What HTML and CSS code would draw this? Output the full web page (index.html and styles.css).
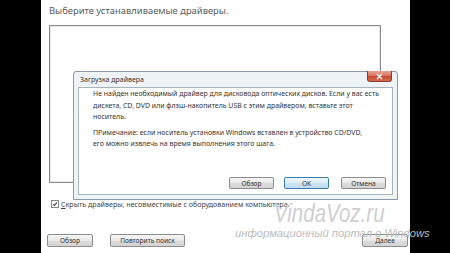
FILE: index.html
```html
<!DOCTYPE html>
<html lang="ru">
<head>
<meta charset="utf-8">
<title>Выберите устанавливаемые драйверы</title>
<link rel="stylesheet" href="styles.css">
</head>
<body>
<div class="screen">
  <div class="bar-left"></div>
  <div class="panel">
    <div class="heading">Выберите устанавливаемые драйверы.</div>
    <div class="listbox"></div>
    <div class="check-row">
      <span class="checkbox"><svg width="8" height="8" viewBox="0 0 8 8"><path d="M1.5 4 L3.3 6 L6.6 1.6" fill="none" stroke="#333" stroke-width="1.4"/></svg></span>
      <span class="check-label"><u>С</u>крыть драйверы, несовместимые с оборудованием компьютера.</span>
    </div>
    <div class="button-row">
      <span class="btn btn-browse">Обзор</span>
      <span class="btn btn-retry">Повторить поиск</span>
      <span class="btn btn-next">Далее</span>
    </div>

    <div class="dialog">
      <div class="dialog-title">Загрузка драйвера</div>
      <div class="dialog-close"><svg width="9" height="7" viewBox="0 0 9 7"><path d="M2 1 L7 6 M7 1 L2 6" stroke="#fff" stroke-width="1.3"/></svg></div>
      <div class="dialog-body">
        <p class="dialog-text">Не найден необходимый драйвер для дисковода оптических дисков. Если у вас есть<br>дискета, CD, DVD или флэш-накопитель USB с этим драйвером, вставьте этот<br>носитель.</p>
        <p class="dialog-text">ПРимечание: если носитель установки Windows вставлен в устройство CD/DVD,<br>его можно извлечь на время выполнения этого шага.</p>
        <div class="dialog-buttons">
          <span class="btn dbtn">Обзор</span>
          <span class="btn dbtn btn-default">OK</span>
          <span class="btn dbtn">Отмена</span>
        </div>
      </div>
    </div>
  </div>
  <div class="wm-site">VindaVoz.ru</div>
  <div class="wm-tag">информационный портал о Windows</div>
</div>
</body>
</html>
```
FILE: styles.css
```css
html, body {
  margin: 0;
  padding: 0;
  background: #000;
}
.screen {
  position: relative;
  display: flex;
  width: 450px;
  height: 253px;
  overflow: hidden;
  font-family: "Noto Sans", "Liberation Sans", sans-serif;
}
.bar-left {
  width: 41px;
  flex: none;
}
.panel {
  position: relative;
  width: 369px;
  flex: none;
  background: #fff;
  display: flex;
  flex-direction: column;
}
.heading {
  margin: 4px 0 0 8px;
  font-size: 9.4px;
  line-height: 13px;
  color: #5b5b5b;
  white-space: nowrap;
}
.listbox {
  margin: 8px 0 0 8px;
  width: 332px;
  height: 158px;
  box-sizing: border-box;
  border: 1px solid #8d8d8d;
  box-shadow: inset 0 0 0 1px #e6e6e6;
}
.check-row {
  display: flex;
  align-items: center;
  gap: 2px;
  margin: 16px 0 0 10px;
  height: 10px;
  font-size: 7.1px;
  color: #444;
  white-space: nowrap;
}
.checkbox {
  width: 8px;
  height: 8px;
  box-sizing: border-box;
  border: 1px solid #8a8a8a;
  background: #fff;
  display: flex;
  align-items: center;
  justify-content: center;
}
.checkbox svg { display: block; }
.button-row {
  display: flex;
  margin: 25px 0 0 6px;
}
.btn {
  display: flex;
  align-items: center;
  justify-content: center;
  box-sizing: border-box;
  height: 13px;
  border: 1px solid #8c8c8c;
  border-radius: 2px;
  background: linear-gradient(#f6f6f6, #e8e8e8 50%, #dcdcdc 51%, #d4d4d4);
  font-size: 6.6px;
  color: #333;
  white-space: nowrap;
}
.btn-browse { width: 46px; }
.btn-retry { width: 75px; margin-left: 17px; }
.btn-next { width: 46px; margin-left: auto; margin-right: 2px; }

.dialog {
  position: absolute;
  left: 32px;
  top: 71px;
  width: 325px;
  height: 129px;
  box-sizing: border-box;
  border: 1px solid #8a9aa8;
  border-radius: 3px 3px 0 0;
  background: #eef4f6;
  display: flex;
  flex-direction: column;
}
.dialog-title {
  height: 15px;
  padding-left: 6px;
  font-size: 7px;
  line-height: 16px;
  color: #333;
}
.dialog-close {
  position: absolute;
  top: -1px;
  left: 293px;
  width: 25px;
  height: 11px;
  box-sizing: border-box;
  border: 1px solid #8a3a2e;
  border-top: none;
  border-radius: 0 0 3px 3px;
  background: linear-gradient(#e5a595, #d7725d 50%, #c44a30 51%, #d66a50);
  display: flex;
  align-items: center;
  justify-content: center;
}
.dialog-close svg { display: block; }
.dialog-body {
  margin: 0 4px 4px 4px;
  flex: 1;
  background: #fff;
  border: 1px solid #a8b4bc;
  display: flex;
  flex-direction: column;
  padding: 0 6px 5px 14px;
}
.dialog-text {
  margin: 0 0 4px 0;
  font-size: 6.95px;
  line-height: 11.6px;
  color: #333;
  white-space: nowrap;
}
.dialog-buttons {
  margin-top: auto;
  display: flex;
  justify-content: flex-end;
  gap: 10px;
}
.dbtn {
  width: 45px;
  height: 12px;
}
.btn-default {
  border-color: #3a7cb0;
  background: linear-gradient(#eef6fb, #dcecf7 50%, #cde3f2 51%, #c4dcee);
  margin-right: 2px;
}

.wm-site {
  position: absolute;
  left: 274px;
  top: 199px;
  font-family: "Liberation Sans", sans-serif;
  font-style: italic;
  font-size: 25px;
  line-height: 28px;
  color: #cfcfcf;
  white-space: nowrap;
  transform: scaleX(0.82);
  transform-origin: 0 0;
  pointer-events: none;
}
.wm-tag {
  position: absolute;
  left: 235px;
  top: 226px;
  font-family: "Liberation Sans", sans-serif;
  font-style: italic;
  font-size: 11.2px;
  line-height: 14px;
  color: #bcbcbc;
  white-space: nowrap;
  pointer-events: none;
}
```
